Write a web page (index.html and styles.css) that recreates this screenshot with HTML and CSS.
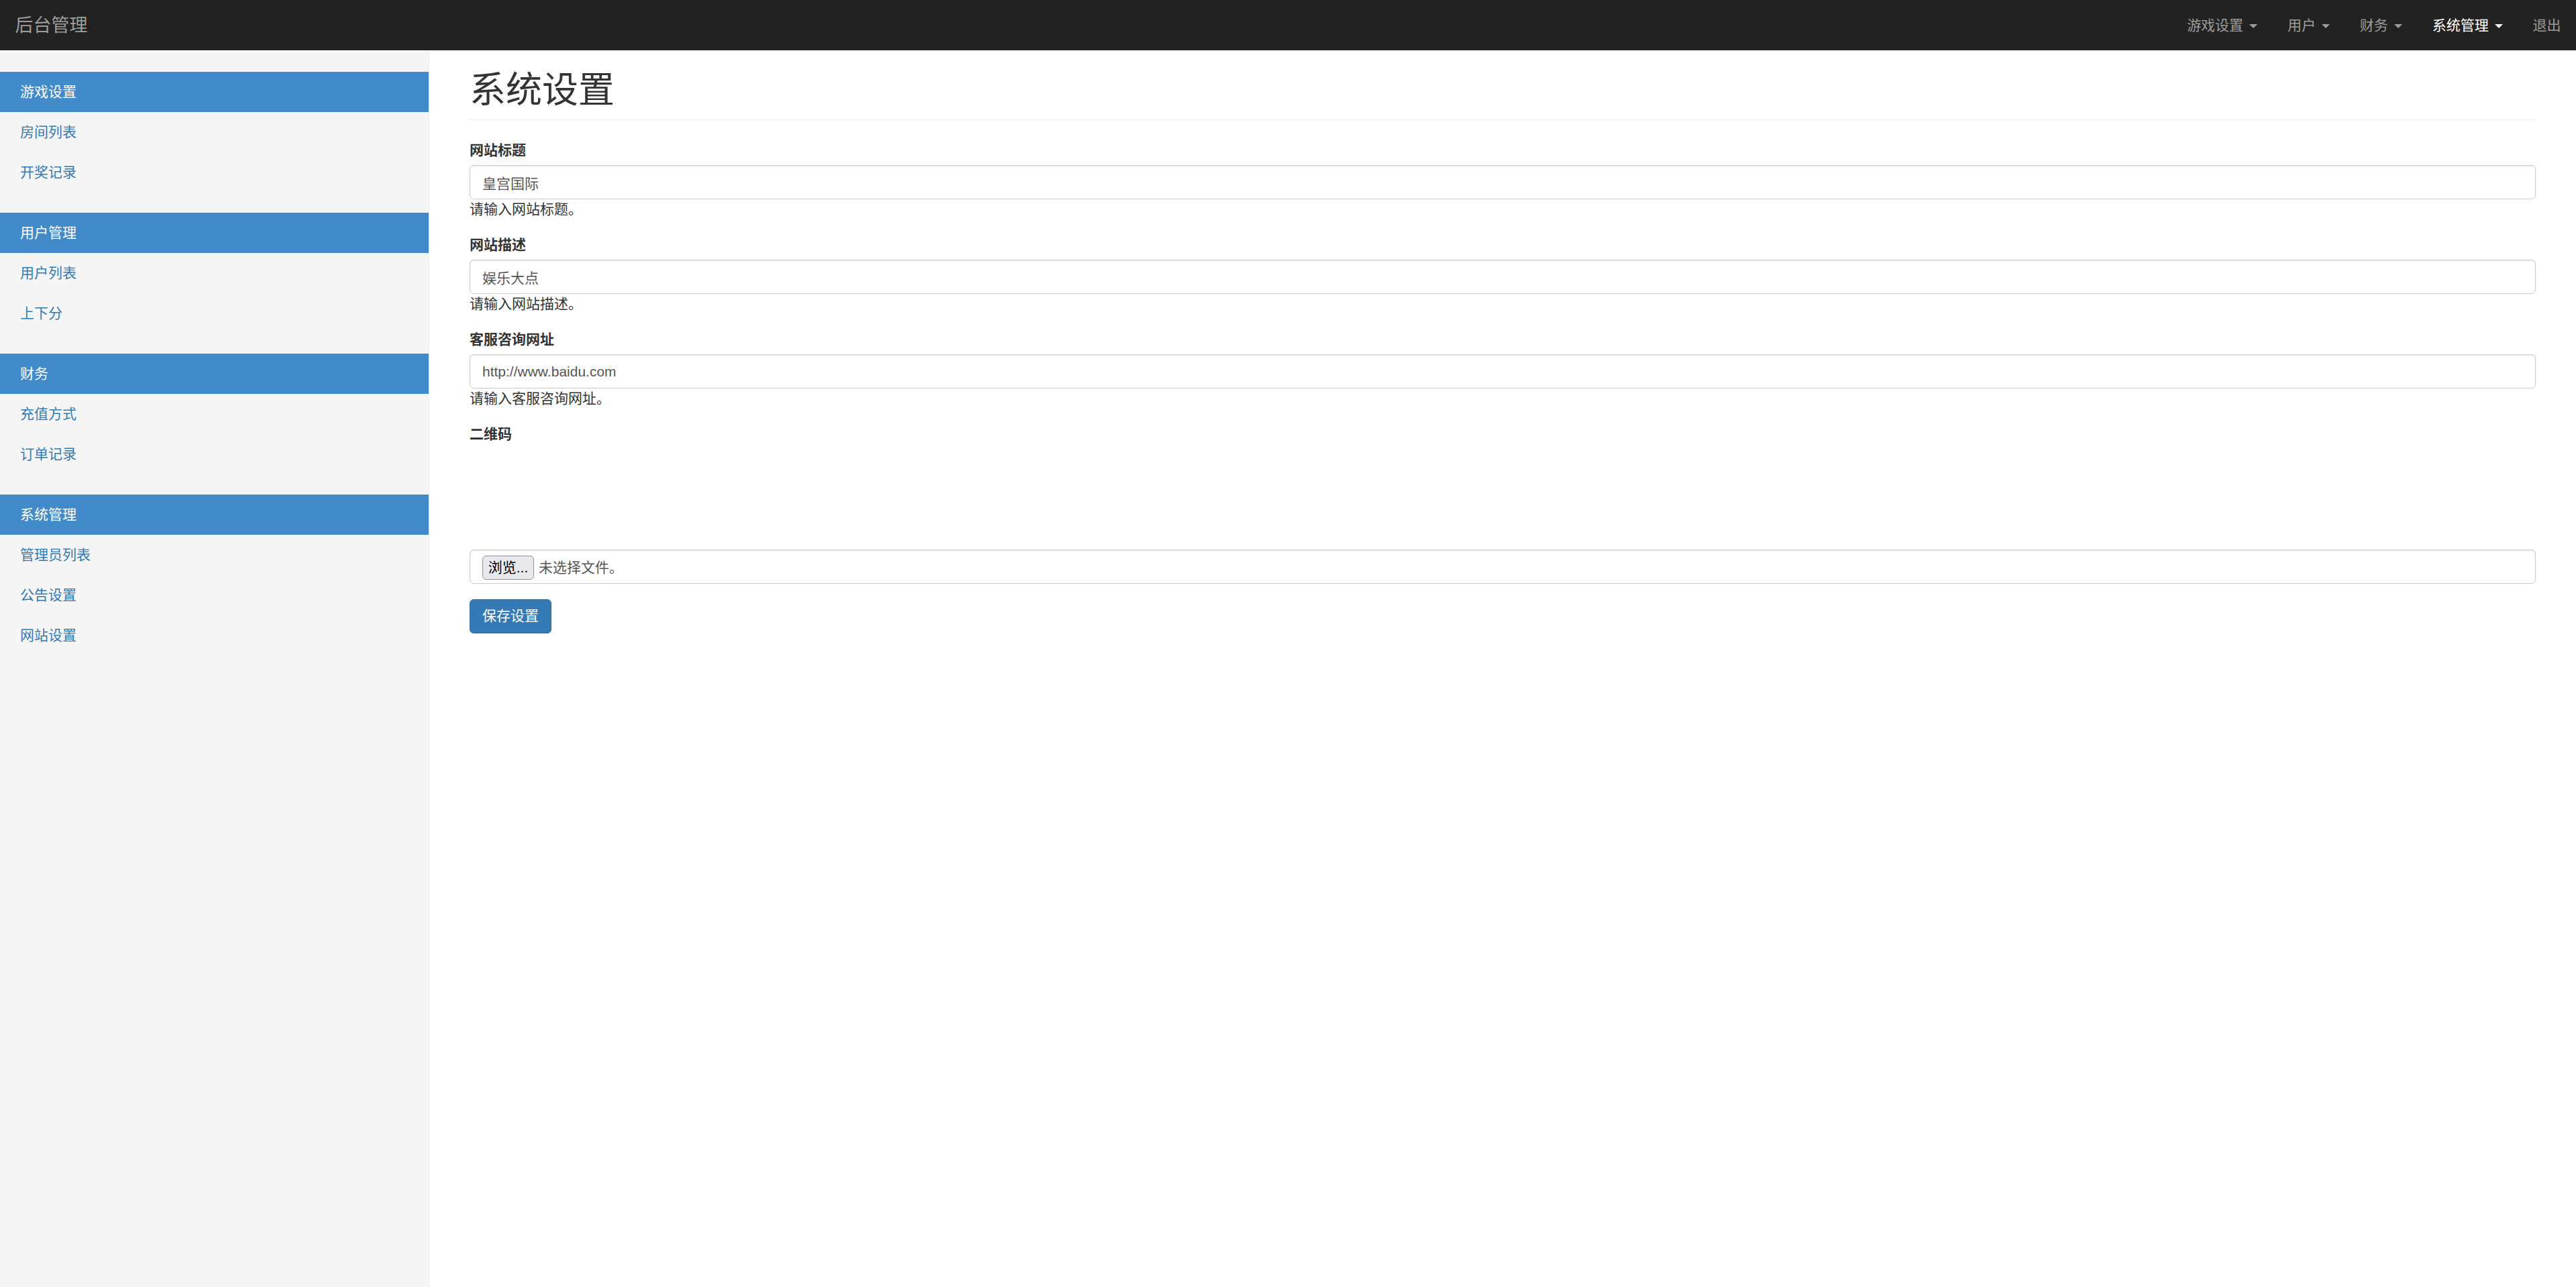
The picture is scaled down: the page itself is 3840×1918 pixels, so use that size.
FILE: index.html
```html
<!DOCTYPE html>
<html lang="zh-CN">
<head>
<meta charset="utf-8">
<title>后台管理</title>
<link rel="stylesheet" href="styles.css">
</head>
<body>
<nav class="navbar">
  <a class="brand" href="#">后台管理</a>
  <ul class="navbar-right">
    <li><a href="#">游戏设置 <span class="caret"></span></a></li>
    <li><a href="#">用户 <span class="caret"></span></a></li>
    <li><a href="#">财务 <span class="caret"></span></a></li>
    <li class="active"><a href="#">系统管理 <span class="caret"></span></a></li>
    <li><a href="#">退出</a></li>
  </ul>
</nav>
<div class="layout">
  <aside class="sidebar">
    <ul class="nav-sidebar">
      <li class="active"><a href="#">游戏设置</a></li>
      <li><a href="#">房间列表</a></li>
      <li><a href="#">开奖记录</a></li>
    </ul>
    <ul class="nav-sidebar">
      <li class="active"><a href="#">用户管理</a></li>
      <li><a href="#">用户列表</a></li>
      <li><a href="#">上下分</a></li>
    </ul>
    <ul class="nav-sidebar">
      <li class="active"><a href="#">财务</a></li>
      <li><a href="#">充值方式</a></li>
      <li><a href="#">订单记录</a></li>
    </ul>
    <ul class="nav-sidebar">
      <li class="active"><a href="#">系统管理</a></li>
      <li><a href="#">管理员列表</a></li>
      <li><a href="#">公告设置</a></li>
      <li><a href="#">网站设置</a></li>
    </ul>
  </aside>
  <main class="main">
    <h1 class="page-header">系统设置</h1>
    <form class="settings-form">
      <div class="form-group">
        <label class="field-label">网站标题</label>
        <input class="form-control" type="text" value="皇宫国际">
        <div class="help-text">请输入网站标题。</div>
      </div>
      <div class="form-group">
        <label class="field-label">网站描述</label>
        <input class="form-control" type="text" value="娱乐大点">
        <div class="help-text">请输入网站描述。</div>
      </div>
      <div class="form-group">
        <label class="field-label">客服咨询网址</label>
        <input class="form-control" type="text" value="http://www.baidu.com">
        <div class="help-text">请输入客服咨询网址。</div>
      </div>
      <div class="form-group">
        <label class="field-label">二维码</label>
        <div class="qr-preview"></div>
        <div class="form-control file-control">
          <span class="browse-btn">浏览...</span><span class="file-name">未选择文件。</span>
        </div>
      </div>
      <button type="button" class="btn-primary">保存设置</button>
    </form>
  </main>
</div>
</body>
</html>
```
FILE: styles.css
```css
* {
  box-sizing: border-box;
}

html, body {
  margin: 0;
  padding: 0;
}

body {
  font-family: "Liberation Sans", "Noto Sans CJK SC", sans-serif;
  font-size: 21px;
  line-height: 30px;
  color: #333;
  background: #fff;
  min-height: 1918px;
  display: flex;
  flex-direction: column;
}

a {
  text-decoration: none;
}

ul {
  list-style: none;
  margin: 0;
  padding: 0;
}

/* navbar */
.navbar {
  height: 75px;
  background: #222;
  display: flex;
  justify-content: space-between;
  align-items: stretch;
  flex-shrink: 0;
}

.brand {
  padding: 22.5px;
  font-size: 27px;
  line-height: 30px;
  color: #9d9d9d;
}

.navbar-right {
  display: flex;
}

.navbar-right a {
  display: block;
  padding: 22.5px;
  line-height: 30px;
  color: #9d9d9d;
}

.navbar-right .active a {
  color: #fff;
}

.caret {
  display: inline-block;
  width: 0;
  height: 0;
  margin-left: 3px;
  vertical-align: middle;
  border-top: 6px solid;
  border-left: 6px solid transparent;
  border-right: 6px solid transparent;
}

/* layout */
.layout {
  flex: 1;
  display: flex;
}

.sidebar {
  width: 640px;
  flex-shrink: 0;
  margin-top: 1.5px;
  padding: 30px 0;
  background: #f5f5f5;
  border-right: 1.5px solid #eee;
}

.nav-sidebar {
  margin-bottom: 30px;
}

.nav-sidebar a {
  display: block;
  padding: 15px 30px;
  line-height: 30px;
  color: #337ab7;
}

.nav-sidebar .active a {
  color: #fff;
  background: #428bca;
}

.main {
  flex: 1;
  padding: 30px 60px;
}

.page-header {
  margin: 0 0 30px;
  padding-bottom: 13.5px;
  border-bottom: 1.5px solid #eee;
  font-size: 54px;
  line-height: 59.4px;
  font-weight: 400;
  color: #333;
}

.form-group {
  margin-bottom: 22.5px;
}

.field-label {
  display: inline-block;
  margin-bottom: 7.5px;
  font-weight: bold;
}

.form-control {
  display: block;
  width: 100%;
  height: 51px;
  padding: 9px 18px;
  font-family: inherit;
  font-size: 21px;
  line-height: 30px;
  color: #555;
  background: #fff;
  border: 1.5px solid #ccc;
  border-radius: 6px;
  box-shadow: inset 0 1.5px 1.5px rgba(0, 0, 0, 0.075);
  outline: none;
}

.help-text {
  color: #333;
}

.qr-preview {
  height: 150px;
}

.file-control {
  display: flex;
  align-items: center;
  padding: 2px 18px 0;
}

.browse-btn {
  display: inline-block;
  height: 36px;
  width: 77px;
  line-height: 34px;
  text-align: center;
  color: #000;
  background: #e9e9ed;
  border: 1.5px solid #8f8f9d;
  border-radius: 6px;
  font-size: 21px;
}

.file-name {
  margin-left: 7px;
  color: #555;
}

.btn-primary {
  display: inline-block;
  height: 51px;
  padding: 9px 18px;
  font-family: inherit;
  font-size: 21px;
  line-height: 30px;
  color: #fff;
  background: #337ab7;
  border: 1.5px solid #2e6da4;
  border-radius: 6px;
}
```
